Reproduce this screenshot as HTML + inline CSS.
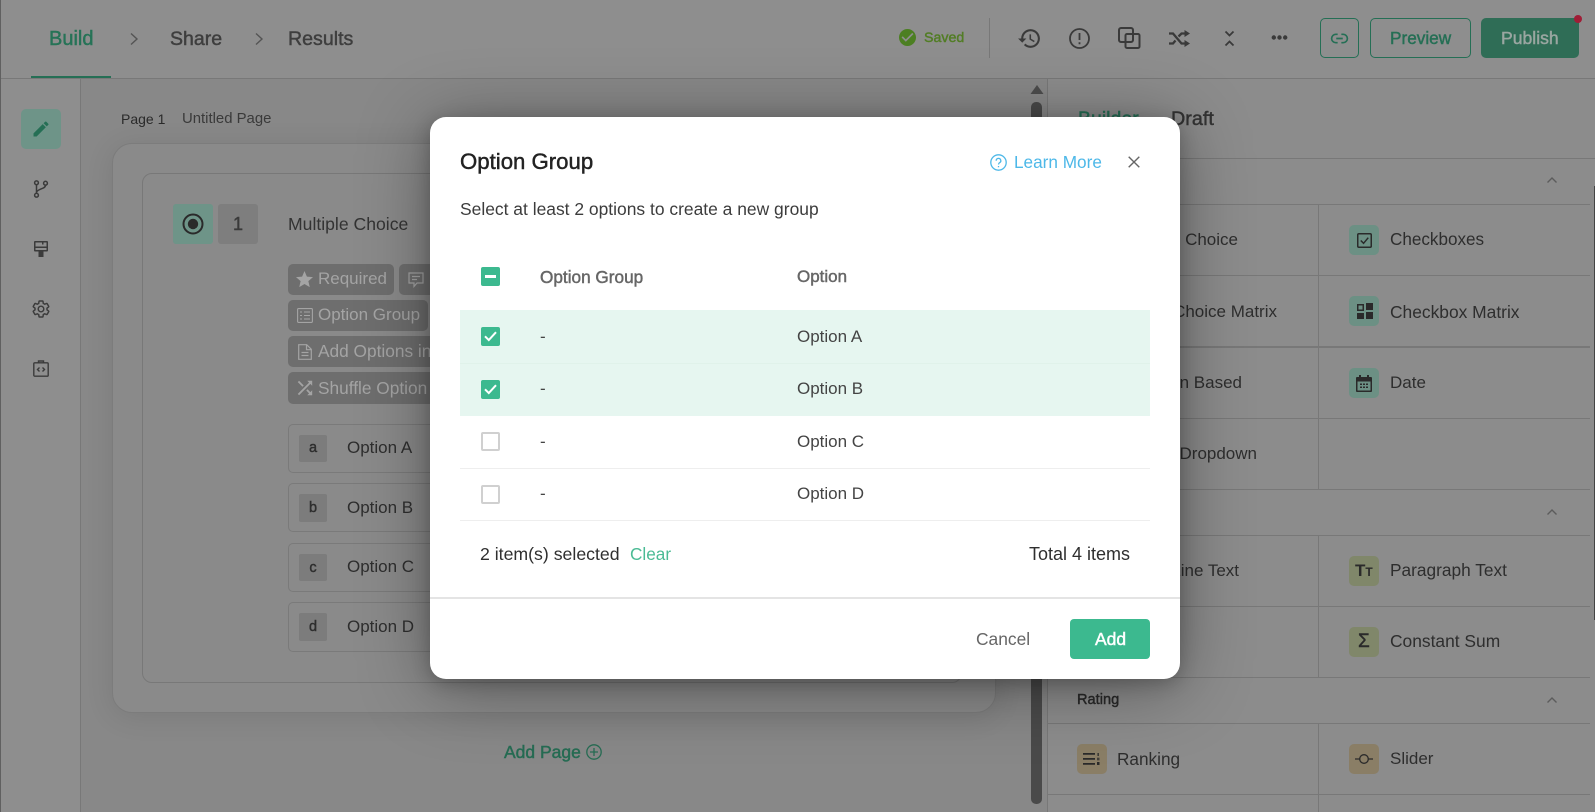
<!DOCTYPE html>
<html><head><meta charset="utf-8"><title>Option Group</title>
<style>
*{box-sizing:border-box}
html,body{margin:0;padding:0;width:1595px;height:812px;overflow:hidden;background:#888;font-family:"Liberation Sans",Arial,sans-serif;color:#2e2e2e}
.a{position:absolute}
.t{position:absolute;line-height:24px;height:24px;white-space:nowrap}
.m{-webkit-text-stroke:.45px currentColor}
svg{position:absolute;display:block;overflow:visible}
.hl{position:absolute;height:1px;background:#787878}
.vl{position:absolute;width:1px;background:#787878}
.chip{position:absolute;left:288px;background:#6e6e6e;border-radius:5px;height:31px}
.chipt{position:absolute;left:318px;line-height:24px;height:24px;white-space:nowrap;color:#a4a4a4;font-size:17px}
.opt{position:absolute;left:288px;width:400px;border:1px solid #7a7a7a;border-radius:5px}
.ltr{position:absolute;left:299px;width:28px;height:27px;background:#7c7c7c;border-radius:2px;text-align:center;line-height:27px;font-size:14.5px;color:#2e2e2e}
.ib{position:absolute;width:30px;height:30px;border-radius:5px}
.g{background:#6c9084}.o{background:#80876a}.n{background:#8a7e66}
.cb{position:absolute;left:481px;width:19px;height:19px;border-radius:2px;background:#3cb98f}
.cbe{background:#fff;border:2px solid #d0d0d0}
</style></head><body>

<!-- left screen sliver -->
<div class="a" style="left:0;top:0;width:1px;height:812px;background:#606060"></div>

<!-- header -->
<div class="a" style="left:1px;top:0;width:1594px;height:79px;background:#8e8e8e;border-bottom:1px solid #787878"></div>
<div class="t m" style="left:49px;top:27px;font-size:20px;color:#267357">Build</div>
<div class="a" style="left:31px;top:76px;width:80px;height:2px;background:#256f55"></div>
<svg style="left:129px;top:32px" width="10" height="14" viewBox="0 0 10 14" fill="none" stroke="#545454" stroke-width="1.4"><path d="M2 1.5 8 7 2 12.5"/></svg>
<div class="t m" style="left:170px;top:27px;font-size:19.500px;color:#3e3e3e">Share</div>
<svg style="left:254px;top:32px" width="10" height="14" viewBox="0 0 10 14" fill="none" stroke="#545454" stroke-width="1.4"><path d="M2 1.5 8 7 2 12.5"/></svg>
<div class="t m" style="left:288px;top:27px;font-size:19.600px;color:#3e3e3e">Results</div>

<svg style="left:899px;top:29px" width="17" height="17" viewBox="2 2 20 20"><path fill="#4c7f22" d="M12 2C6.48 2 2 6.48 2 12s4.48 10 10 10 10-4.48 10-10S17.52 2 12 2zm-2 15l-5-5 1.41-1.41L10 14.17l7.59-7.59L19 8l-9 9z"/></svg>
<div class="t m" style="left:924px;top:26px;font-size:14.2px;color:#527d25">Saved</div>
<div class="vl" style="left:989px;top:18px;height:40px"></div>
<svg style="left:1017px;top:26px" width="25" height="25" viewBox="0 0 24 24"><path fill="#3a3a3a" d="M13 3c-4.97 0-9 4.03-9 9H1l3.89 3.89.07.14L9 12H6c0-3.87 3.13-7 7-7s7 3.13 7 7-3.13 7-7 7c-1.93 0-3.68-.79-4.94-2.06l-1.42 1.42C8.27 19.99 10.51 21 13 21c4.97 0 9-4.03 9-9s-4.03-9-9-9zm-1 5v5l4.28 2.54.72-1.21-3.5-2.08V8H12z"/></svg>
<svg style="left:1069px;top:28px" width="21" height="21" viewBox="0 0 21 21" fill="none" stroke="#3a3a3a" stroke-width="1.800"><circle cx="10.500" cy="10.500" r="9.500"/><path d="M10.500 5v7M10.500 14.200v2"/></svg>
<svg style="left:1118px;top:27px" width="22" height="22" viewBox="0 0 22 22" fill="none" stroke="#3a3a3a" stroke-width="2"><rect x="1" y="1" width="14" height="14" rx="2"/><rect x="7.500" y="7" width="14" height="14" rx="1.500"/></svg>
<svg style="left:1169px;top:30px" width="21" height="17" viewBox="0 0 21 17" fill="none" stroke="#3a3a3a" stroke-width="2.300"><path d="M0 3.500h4l8.500 10H17M0 13.500h4l2.500-3M9.500 6.500l3-3H17"/><path fill="#3a3a3a" stroke="none" d="M15.500 0 21 3.500l-5.500 3.500zM15.500 10 21 13.500 15.500 17z"/></svg>
<svg style="left:1225px;top:31px" width="9" height="15" viewBox="0 0 9 15" fill="none" stroke="#3a3a3a" stroke-width="1.800"><path d="M.5.500l4 4 4-4M.5 14.500l4-4 4 4"/></svg>
<svg style="left:1271px;top:35px" width="17" height="5" viewBox="0 0 17 5" fill="#3a3a3a"><circle cx="2.800" cy="2.500" r="2.200"/><circle cx="8.500" cy="2.500" r="2.200"/><circle cx="14.200" cy="2.500" r="2.200"/></svg>
<div class="a" style="left:1320px;top:18px;width:39px;height:40px;border:1px solid #256f55;border-radius:5px"></div>
<svg style="left:1331px;top:32px" width="17" height="13" viewBox="0 0 18 14" fill="none" stroke="#256f55" stroke-width="1.800"><path d="M7 2.500H5a4.500 4.500 0 0 0 0 9h2M11 2.500h2a4.500 4.500 0 0 1 0 9h-2M5.500 7h7"/></svg>
<div class="a" style="left:1370px;top:18px;width:101px;height:40px;border:1px solid #256f55;border-radius:5px"></div>
<div class="t m" style="left:1390px;top:26px;font-size:17.200px;color:#256f55">Preview</div>
<div class="a" style="left:1481px;top:18px;width:98px;height:40px;background:#2f6d56;border-radius:5px"></div>
<div class="t m" style="left:1501px;top:26px;font-size:17.600px;color:#9aa6a1">Publish</div>
<div class="a" style="left:1574px;top:15px;width:8px;height:8px;border-radius:50%;background:#a01d36"></div>

<!-- sidebar -->
<div class="a" style="left:1px;top:79px;width:79px;height:733px;background:#8e8e8e"></div>
<div class="vl" style="left:80px;top:79px;height:733px"></div>
<div class="a" style="left:21px;top:109px;width:40px;height:40px;border-radius:5px;background:#6e9488"></div>
<svg style="left:31px;top:119px" width="20" height="20" viewBox="0 0 24 24"><path fill="#256f55" d="M3 17.25V21h3.75L17.81 9.94l-3.75-3.750L3 17.25zM20.71 7.04c.39-.39.39-1.02 0-1.41l-2.34-2.34a.9959.9959 0 0 0-1.41 0l-1.83 1.830 3.75 3.75 1.83-1.83z"/></svg>
<svg style="left:33px;top:180px" width="16" height="18" viewBox="0 0 16 18" fill="none" stroke="#3b3b3b" stroke-width="1.5"><circle cx="3.500" cy="2.800" r="1.900"/><circle cx="3.500" cy="15.200" r="1.900"/><circle cx="12.500" cy="3.200" r="1.900"/><path d="M3.500 4.700v8.600M12.500 5.100c0 4-7 3.200-9 7"/></svg>
<svg style="left:34px;top:241px" width="14" height="16" viewBox="0 0 14 16"><path fill="#3b3b3b" d="M1 0h12a1 1 0 0 1 1 1v8.500a1 1 0 0 1-1 1H9.500V16h-5v-5.500H1a1 1 0 0 1-1-1V1a1 1 0 0 1 1-1zm.500 1.500v4h11v-4H9.500v2H8v-2zM1.500 7v2h11V7z"/></svg>
<svg style="left:33px;top:301px" width="16" height="16" viewBox="2 2 20 20" fill="none" stroke="#3b3b3b" stroke-width="1.800"><path d="M19.430 12.980c.04-.32.07-.64.07-.98 0-.34-.03-.66-.07-.98l2.110-1.650c.19-.15.24-.42.12-.64l-2-3.460c-.09-.16-.26-.25-.44-.25-.06 0-.12.01-.17.03l-2.490 1c-.52-.4-1.080-.73-1.690-.98l-.38-2.650C14.460 2.180 14.250 2 14 2h-4c-.25 0-.46.18-.49.42l-.38 2.650c-.61.25-1.170.59-1.690.98l-2.490-1c-.06-.02-.12-.03-.18-.03-.17 0-.34.09-.43.25l-2 3.460c-.13.22-.07.49.12.64l2.110 1.650c-.04.32-.07.65-.07.98 0 .33.03.66.07.98l-2.110 1.650c-.19.15-.24.42-.12.64l2 3.460c.09.16.26.25.44.25.06 0 .12-.01.17-.03l2.490-1c.52.4 1.080.73 1.690.98l.38 2.650c.03.24.24.42.49.42h4c.25 0 .46-.18.49-.42l.38-2.650c.61-.25 1.170-.59 1.690-.98l2.490 1c.06.02.12.03.18.03.17 0 .34-.09.43-.25l2-3.460c.12-.22.07-.49-.12-.64l-2.110-1.650z"/><circle cx="12" cy="12" r="3.500"/></svg>
<svg style="left:33px;top:360px" width="16" height="17" viewBox="0 0 16 17" fill="none" stroke="#3b3b3b" stroke-width="1.400"><rect x=".8" y="2.800" width="14.400" height="13.400" rx="1"/><path d="M5.500 2.800V1h5v1.800M6.500 7.500 4.500 9.500l2 2M9.500 7.500l2 2-2 2"/></svg>

<!-- main -->
<div class="t" style="left:121px;top:107px;font-size:14px;color:#2a2a2a">Page 1</div>
<div class="t" style="left:182px;top:107px;font-size:14.900px;color:#3a3a3a">Untitled Page</div>

<div class="a" style="left:112px;top:143px;width:884px;height:570px;border:1px solid #7c7c7c;border-radius:20px;background:#8a8a8a;box-shadow:0 4px 28px rgba(0,0,0,.1)"></div>
<div class="a" style="left:142px;top:173px;width:820px;height:510px;border:1px solid #787878;border-radius:10px;background:#8a8a8a"></div>

<div class="a" style="left:173px;top:204px;width:40px;height:40px;background:#6e9488;border-radius:3px"></div>
<svg style="left:182px;top:213px" width="22" height="22" viewBox="0 0 22 22"><circle cx="11" cy="11" r="9.500" fill="none" stroke="#2a2a2a" stroke-width="2"/><circle cx="11" cy="11" r="5.200" fill="#2a2a2a"/></svg>
<div class="a" style="left:218px;top:204px;width:40px;height:40px;background:#7e7e7e;border-radius:3px"></div>
<div class="t m" style="left:233px;top:212px;font-size:18px;color:#3a3a3a">1</div>
<div class="t" style="left:288px;top:212px;font-size:17.600px;color:#333">Multiple Choice</div>

<div class="chip" style="top:264px;width:106px"></div>
<svg style="left:296px;top:271px" width="17" height="17" viewBox="2 2 20 20"><path fill="#a4a4a4" d="M12 17.270L18.180 21l-1.640-7.030L22 9.240l-7.190-.61L12 2 9.190 8.630 2 9.240l5.460 4.730L5.820 21z"/></svg>
<div class="chipt" style="top:267px">Required</div>
<div class="chip" style="left:399px;top:264px;width:60px"></div>
<svg style="left:408px;top:272px" width="16" height="16" viewBox="0 0 16 16" fill="none" stroke="#a4a4a4" stroke-width="1.200"><path d="M1 1h14v10H9l-3 3.500V11H1zM4 4.500h8M4 7.500h5"/></svg>
<div class="chip" style="top:300px;width:140px"></div>
<svg style="left:297px;top:308px" width="16" height="15" viewBox="0 0 16 15" fill="none" stroke="#a4a4a4" stroke-width="1.100"><rect x=".6" y=".6" width="14.800" height="13.800" rx="1"/><path d="M3 4h2M7 4h6M3 7.500h2M7 7.500h6M3 11h2M7 11h6"/></svg>
<div class="chipt" style="top:303px">Option Group</div>
<div class="chip" style="top:336px;width:170px"></div>
<svg style="left:298px;top:344px" width="14" height="16" viewBox="0 0 14 16" fill="none" stroke="#a4a4a4" stroke-width="1.200"><path d="M.7.7h8l4.600 4.600v10H.7zM8.500.7v5h5M3.500 8.500h7M3.500 11.500h7"/></svg>
<div class="chipt" style="top:339px;font-size:17.300px">Add Options in Bulk</div>
<div class="chip" style="top:372px;width:170px;height:32px"></div>
<svg style="left:296px;top:379px" width="18" height="18" viewBox="2 2 20 20"><path fill="#a4a4a4" d="M10.590 9.170L5.410 4 4 5.410l5.170 5.170 1.420-1.410zM14.500 4l2.040 2.040L4 18.590 5.410 20 17.960 7.460 20 9.500V4h-5.500zm.33 9.410l-1.410 1.410 3.130 3.130L14.500 20H20v-5.500l-2.040 2.040-3.130-3.130z"/></svg>
<div class="chipt" style="top:376px;font-size:17.300px">Shuffle Option Order</div>

<div class="opt" style="top:424px;height:49px"></div><div class="ltr m" style="top:435px">a</div><div class="t" style="left:347px;top:436px;font-size:17px">Option A</div>
<div class="opt" style="top:483px;height:49px"></div><div class="ltr m" style="top:494px;height:28px;line-height:29px">b</div><div class="t" style="left:347px;top:496px;font-size:17px">Option B</div>
<div class="opt" style="top:543px;height:49px"></div><div class="ltr m" style="top:554px;line-height:28px">c</div><div class="t" style="left:347px;top:555px;font-size:17px">Option C</div>
<div class="opt" style="top:602px;height:50px"></div><div class="ltr m" style="top:613px;height:28px;line-height:29px">d</div><div class="t" style="left:347px;top:615px;font-size:17px">Option D</div>

<div class="t m" style="left:504px;top:740px;font-size:17.500px;color:#266c53">Add Page</div>
<svg style="left:586px;top:744px" width="16" height="16" viewBox="0 0 16 16" fill="none" stroke="#266c53" stroke-width="1.300"><circle cx="8" cy="8" r="7.200"/><path d="M8 4v8M4 8h8"/></svg>

<!-- scrollbar -->
<svg style="left:1030px;top:85px" width="14" height="9" viewBox="0 0 14 9"><path fill="#4d4d4d" d="M7 0l6.500 9H.5z"/></svg>
<div class="a" style="left:1031px;top:102px;width:11px;height:702px;border-radius:5px;background:#4a4a4a"></div>

<!-- right panel -->
<div class="a" style="left:1047px;top:79px;width:548px;height:733px;background:#8c8c8c;border-left:1px solid #787878"></div>
<div class="t m" style="left:1078px;top:107px;font-size:19.500px;color:#256f55">Builder</div>
<div class="t m" style="left:1171px;top:107px;font-size:19.800px;color:#333">Draft</div>
<div class="hl" style="left:1047px;top:158px;width:548px"></div>
<div class="hl" style="left:1047px;top:204px;width:543px"></div>
<div class="hl" style="left:1047px;top:275px;width:543px"></div>
<div class="hl" style="left:1047px;top:346px;width:543px;height:2px"></div>
<div class="hl" style="left:1047px;top:418px;width:543px"></div>
<div class="hl" style="left:1047px;top:489px;width:543px"></div>
<div class="hl" style="left:1047px;top:535px;width:543px"></div>
<div class="hl" style="left:1047px;top:606px;width:543px"></div>
<div class="hl" style="left:1047px;top:677px;width:543px"></div>
<div class="hl" style="left:1047px;top:723px;width:543px"></div>
<div class="hl" style="left:1047px;top:794px;width:543px"></div>
<div class="vl" style="left:1318px;top:204px;height:285px"></div>
<div class="vl" style="left:1318px;top:535px;height:142px"></div>
<div class="vl" style="left:1318px;top:723px;height:89px"></div>
<div class="a" style="left:1594px;top:186px;width:1px;height:434px;background:#444"></div>
<svg style="left:1546px;top:176px" width="12" height="8" viewBox="0 0 12 8" fill="none" stroke="#5c5c5c" stroke-width="1.400"><path d="M1.500 6.500 6 2l4.500 4.500"/></svg>
<svg style="left:1546px;top:508px" width="12" height="8" viewBox="0 0 12 8" fill="none" stroke="#5c5c5c" stroke-width="1.400"><path d="M1.500 6.500 6 2l4.500 4.500"/></svg>
<svg style="left:1546px;top:696px" width="12" height="8" viewBox="0 0 12 8" fill="none" stroke="#5c5c5c" stroke-width="1.400"><path d="M1.500 6.500 6 2l4.500 4.500"/></svg>

<div class="t" style="right:357px;top:228px;font-size:17px">Multiple Choice</div>
<div class="t" style="right:318px;top:300px;font-size:17px">Choice Matrix</div>
<div class="t" style="right:353px;top:371px;font-size:17px">Option Based</div>
<div class="t" style="right:338px;top:442px;font-size:17px">Cascade Dropdown</div>
<div class="t" style="right:356px;top:559px;font-size:17px">Single Line Text</div>
<div class="t m" style="left:1077px;top:688px;font-size:14.600px;color:#2a2a2a">Rating</div>

<div class="ib g" style="left:1349px;top:225px"></div>
<svg style="left:1357px;top:233px" width="15" height="15" viewBox="0 0 16 16" fill="none" stroke="#2a2a2a" stroke-width="1.600"><rect x=".8" y=".8" width="14.400" height="14.400" rx="1.200"/><path d="M4 8l3 3 5-6"/></svg>
<div class="t" style="left:1390px;top:228px;font-size:17.100px">Checkboxes</div>
<div class="ib g" style="left:1349px;top:296px"></div>
<svg style="left:1357px;top:303px" width="16" height="16" viewBox="0 0 16 16" fill="#2a2a2a"><path fill-rule="evenodd" d="M0 1h7v7H0zM1.500 2.500v4h4v-4zM9 0h7v7H9zM0 10h7v6H0zM9 9h7v7H9z"/></svg>
<div class="t" style="left:1390px;top:300px;font-size:17.400px">Checkbox Matrix</div>
<div class="ib g" style="left:1349px;top:368px"></div>
<svg style="left:1356px;top:375px" width="16" height="17" viewBox="0 0 16 17"><path fill="#2a2a2a" fill-rule="evenodd" d="M3 0h2v2h6V0h2v2h2a1 1 0 0 1 1 1v13a1 1 0 0 1-1 1H1a1 1 0 0 1-1-1V3a1 1 0 0 1 1-1h2zM1.500 6.500v9h13v-9zM4 8.500h2v1.500H4zM7 8.500h2v1.500H7zM10 8.500h2v1.500h-2zM4 11.500h2V13H4zM7 11.500h2V13H7zM10 11.500h2V13h-2z"/></svg>
<div class="t" style="left:1390px;top:371px;font-size:17px">Date</div>
<div class="ib o" style="left:1349px;top:556px"></div>
<div class="t" style="left:1355px;top:559px;font-size:17px;font-weight:700;color:#2a2a2a">T<span style="font-size:12px">T</span></div>
<div class="t" style="left:1390px;top:558px;font-size:17.300px">Paragraph Text</div>
<div class="ib o" style="left:1349px;top:627px"></div>
<div class="t m" style="left:1358px;top:630px;font-size:19px;color:#2a2a2a">Σ</div>
<div class="t" style="left:1390px;top:629px;font-size:17.400px">Constant Sum</div>
<div class="ib n" style="left:1077px;top:744px"></div>
<svg style="left:1083px;top:753px" width="17" height="12" viewBox="0 0 17 12" fill="#2a2a2a"><path d="M0 0h12v1.800H0zM0 5h12v1.800H0zM0 10h12v1.800H0zM14.500 0h1.300v3h-1.300zM14 4.800h2.500v1h-2.500zM14 6.300h2.500v1h-2.500zM14 9h2.500v3H14z"/></svg>
<div class="t" style="left:1117px;top:747px;font-size:17.200px">Ranking</div>
<div class="ib n" style="left:1349px;top:744px"></div>
<svg style="left:1355px;top:753px" width="18" height="12" viewBox="0 0 18 12" fill="none" stroke="#2a2a2a" stroke-width="1.300"><circle cx="9" cy="6" r="4.300"/><path d="M0 6h4.700M13.300 6H18"/></svg>
<div class="t" style="left:1390px;top:747px;font-size:17px">Slider</div>

<!-- modal -->
<div class="a" style="left:430px;top:117px;width:750px;height:562px;background:#fff;border-radius:16px;box-shadow:0 8px 70px rgba(0,0,0,.38),0 4px 18px rgba(0,0,0,.22);z-index:5"></div>
<div class="a" style="left:0;top:0;width:1595px;height:812px;z-index:6">
<div class="t m" style="left:460px;top:150px;font-size:22.200px;color:#222">Option Group</div>
<svg style="left:990px;top:154px" width="17" height="17" viewBox="0 0 17 17" fill="none" stroke="#4db8e8" stroke-width="1.300"><circle cx="8.500" cy="8.500" r="7.700"/><path d="M6.200 6.700a2.300 2.300 0 1 1 3.400 2c-.8.500-1.100.9-1.100 1.800M8.500 12v1.300"/></svg>
<div class="t" style="left:1014px;top:150px;font-size:17.200px;color:#4db8e8">Learn More</div>
<svg style="left:1128px;top:156px" width="12" height="12" viewBox="0 0 12 12" stroke="#666" stroke-width="1.400"><path d="M.7.7l10.600 10.600M11.300.7.700 11.300"/></svg>
<div class="t" style="left:460px;top:197px;font-size:17.450px;color:#3c3c3c">Select at least 2 options to create a new group</div>

<div class="cb" style="top:267px"></div>
<div class="a" style="left:485px;top:275px;width:11px;height:3px;background:#fff"></div>
<div class="t m" style="left:540px;top:265px;font-size:17.200px;color:#666">Option Group</div>
<div class="t m" style="left:797px;top:265px;font-size:17px;color:#666">Option</div>

<div class="a" style="left:460px;top:310px;width:690px;height:106px;background:#e6f6f0"></div>
<div class="a" style="left:460px;top:363px;width:690px;height:1px;background:#e0f2ea"></div>
<div class="cb" style="top:327px"></div>
<svg style="left:484px;top:331px" width="13" height="11" viewBox="0 0 13 11" fill="none" stroke="#fff" stroke-width="2"><path d="M1 5.300 4.800 9.100 12 1.200"/></svg>
<div class="t" style="left:540px;top:325px;font-size:17px;color:#444">-</div>
<div class="t" style="left:797px;top:325px;font-size:17px;color:#444">Option A</div>
<div class="cb" style="top:380px"></div>
<svg style="left:484px;top:384px" width="13" height="11" viewBox="0 0 13 11" fill="none" stroke="#fff" stroke-width="2"><path d="M1 5.300 4.800 9.100 12 1.200"/></svg>
<div class="t" style="left:540px;top:377px;font-size:17px;color:#444">-</div>
<div class="t" style="left:797px;top:377px;font-size:17px;color:#444">Option B</div>
<div class="cb cbe" style="top:432px"></div>
<div class="t" style="left:540px;top:430px;font-size:17px;color:#444">-</div>
<div class="t" style="left:797px;top:430px;font-size:17px;color:#444">Option C</div>
<div class="a" style="left:460px;top:468px;width:690px;height:1px;background:#eee"></div>
<div class="cb cbe" style="top:485px"></div>
<div class="t" style="left:540px;top:482px;font-size:17px;color:#444">-</div>
<div class="t" style="left:797px;top:482px;font-size:17px;color:#444">Option D</div>
<div class="a" style="left:460px;top:520px;width:690px;height:1px;background:#eee"></div>

<div class="t" style="left:480px;top:542px;font-size:17.700px;color:#2f2f2f">2 item(s) selected</div>
<div class="t" style="left:630px;top:542px;font-size:17.200px;color:#4bbb95">Clear</div>
<div class="t" style="left:1029px;top:542px;font-size:18px;color:#2f2f2f">Total 4 items</div>
<div class="a" style="left:430px;top:597px;width:750px;height:2px;background:#e4e4e4"></div>
<div class="t" style="left:976px;top:627px;font-size:17.400px;color:#666">Cancel</div>
<div class="a" style="left:1070px;top:619px;width:80px;height:40px;background:#3cb98f;border-radius:4px"></div>
<div class="t m" style="left:1095px;top:627px;font-size:17.500px;color:#fff">Add</div>
</div>
</body></html>
